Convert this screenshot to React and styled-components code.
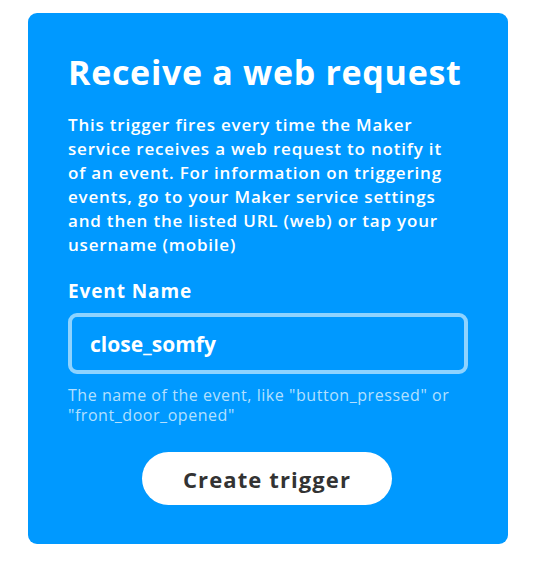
import React from "react";
import styled, { createGlobalStyle } from "styled-components";

const Global = createGlobalStyle`
  html, body { margin: 0; padding: 0; background: #ffffff; }
  body { font-family: "Open Sans", "Noto Sans", sans-serif; }
`;

const Page = styled.div`
  width: 556px;
  height: 570px;
  padding: 13px 0 0 28px;
  box-sizing: border-box;
  background: #fff;
`;

const Card = styled.section`
  width: 480px;
  height: 531px;
  box-sizing: border-box;
  background: #0099ff;
  border-radius: 9px;
  padding: 37px 40px 0 40px;
  display: flex;
  flex-direction: column;
  color: #fff;
`;

const Title = styled.h1`
  margin: 0;
  font-size: 34px;
  line-height: 44px;
  font-weight: 700;
  letter-spacing: 0.7px;
  white-space: nowrap;
`;

const Description = styled.p`
  margin: 19px 0 0;
  max-width: 388px;
  font-size: 17px;
  line-height: 24px;
  font-weight: 600;
  letter-spacing: 0.8px;
`;

const Label = styled.label`
  margin-top: 21px;
  font-size: 19px;
  line-height: 26px;
  font-weight: 700;
  letter-spacing: 0.9px;
`;

const Input = styled.div`
  margin-top: 9px;
  width: 400px;
  height: 61px;
  box-sizing: border-box;
  border: 4px solid #8ed3ff;
  border-radius: 9px;
  padding: 0 18px;
  display: flex;
  align-items: center;
  font-size: 21px;
  font-weight: 700;
`;

const Helper = styled.p`
  margin: 11px 0 0;
  max-width: 400px;
  font-size: 16px;
  line-height: 20px;
  font-weight: 500;
  letter-spacing: 0.55px;
  color: #b3e0ff;
`;

const Button = styled.button`
  align-self: center;
  margin: 27px 0 0 -2px;
  width: 250px;
  height: 53px;
  border: none;
  border-radius: 27px;
  background: #fff;
  color: #333;
  font-family: inherit;
  font-size: 22px;
  font-weight: 700;
  letter-spacing: 1.1px;
`;

export default function App() {
  return (
    <>
      <Global />
      <Page>
        <Card>
          <Title>Receive a web request</Title>
          <Description>
            This trigger fires every time the Maker service receives a web request to notify it of an
            event. For information on triggering events, go to your Maker service settings and then
            the listed URL (web) or tap your username (mobile)
          </Description>
          <Label>Event Name</Label>
          <Input>close_somfy</Input>
          <Helper>
            The name of the event, like "button_pressed" or "front_door_opened"
          </Helper>
          <Button>Create trigger</Button>
        </Card>
      </Page>
    </>
  );
}
